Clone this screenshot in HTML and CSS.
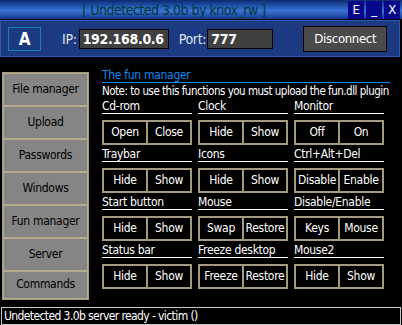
FILE: index.html
```html
<!DOCTYPE html>
<html lang="en">
<head>
  <meta charset="UTF-8">
  <title>Undetected 3.0b</title>
  <link rel="stylesheet" href="styles.css">
</head>
<body>
  <div class="window">
    <div class="titlebar">
      <div class="title">[ Undetected 3.0b by knox_rw ]</div>
      <div class="wbtn">E</div>
      <div class="wbtn">_</div>
      <div class="wbtn">X</div>
    </div>

    <div class="header">
      <div class="logo">A</div>
      <span class="hlabel ip-label">IP:</span>
      <div class="field ip">192.168.0.6</div>
      <span class="hlabel port-label">Port:</span>
      <div class="field port">777</div>
      <button class="disconnect">Disconnect</button>
    </div>

    <div class="main">
      <div class="sidebar">
        <div class="nav">File manager</div>
        <div class="nav">Upload</div>
        <div class="nav">Passwords</div>
        <div class="nav">Windows</div>
        <div class="nav">Fun manager</div>
        <div class="nav">Server</div>
        <div class="nav last">Commands</div>
      </div>

      <div class="content">
        <div class="heading">The fun manager</div>
        <div class="note">Note: to use this functions you must upload the fun.dll plugin</div>
        <div class="grid">
          <div class="group">
            <div class="label">Cd-rom</div>
            <div class="btns"><div class="btn">Open</div><div class="btn">Close</div></div>
          </div>
          <div class="group">
            <div class="label">Clock</div>
            <div class="btns"><div class="btn">Hide</div><div class="btn">Show</div></div>
          </div>
          <div class="group">
            <div class="label">Monitor</div>
            <div class="btns"><div class="btn">Off</div><div class="btn">On</div></div>
          </div>

          <div class="group">
            <div class="label">Traybar</div>
            <div class="btns"><div class="btn">Hide</div><div class="btn">Show</div></div>
          </div>
          <div class="group">
            <div class="label">Icons</div>
            <div class="btns"><div class="btn">Hide</div><div class="btn">Show</div></div>
          </div>
          <div class="group">
            <div class="label">Ctrl+Alt+Del</div>
            <div class="btns"><div class="btn">Disable</div><div class="btn">Enable</div></div>
          </div>

          <div class="group">
            <div class="label">Start button</div>
            <div class="btns"><div class="btn">Hide</div><div class="btn">Show</div></div>
          </div>
          <div class="group">
            <div class="label">Mouse</div>
            <div class="btns"><div class="btn">Swap</div><div class="btn">Restore</div></div>
          </div>
          <div class="group">
            <div class="label">Disable/Enable</div>
            <div class="btns"><div class="btn">Keys</div><div class="btn">Mouse</div></div>
          </div>

          <div class="group">
            <div class="label">Status bar</div>
            <div class="btns"><div class="btn">Hide</div><div class="btn">Show</div></div>
          </div>
          <div class="group">
            <div class="label">Freeze desktop</div>
            <div class="btns"><div class="btn">Freeze</div><div class="btn">Restore</div></div>
          </div>
          <div class="group">
            <div class="label">Mouse2</div>
            <div class="btns"><div class="btn">Hide</div><div class="btn">Show</div></div>
          </div>
        </div>
      </div>
    </div>

    <div class="status">Undetected 3.0b server ready - victim ()</div>
  </div>
</body>
</html>
```

FILE: styles.css
```css
body {
  margin: 0;
  background: #000;
  font-family: "DejaVu Sans Condensed", "Liberation Sans", sans-serif;
  font-size: 12px;
  letter-spacing: -0.3px;
  color: #fff;
  overflow: hidden;
}

.window {
  width: 402px;
  height: 325px;
  overflow: hidden;
}

/* title bar */
.titlebar {
  display: flex;
  height: 19px;
  background: linear-gradient(#0c2a70, #2d64c4 45%, #3a74d6 55%, #123a8c);
}

.title {
  flex: 1;
  height: 17px;
  padding-top: 2px;
  text-align: center;
  color: #003a3a;
  font-size: 14px;
  letter-spacing: -0.5px;
  line-height: 17px;
  white-space: nowrap;
}

.wbtn {
  width: 16px;
  height: 18px;
  margin: 1px 2px 0 0;
  background: #07078c;
  color: #fff;
  font-size: 13px;
  line-height: 18px;
  text-align: center;
}

/* connection header */
.header {
  display: flex;
  align-items: center;
  height: 35px;
  margin: 1px 2px 0 0;
  border: 1px solid #2a5cb0;
  background: #1c3a82;
}

.logo {
  width: 31px;
  height: 22px;
  margin-left: 7px;
  border: 1px solid #1584a6;
  text-align: center;
  font-weight: bold;
  font-size: 17px;
  line-height: 22px;
}

.hlabel {
  color: #dde4f0;
  font-size: 14px;
}

.ip-label {
  margin-left: 21px;
  margin-right: 2px;
}

.port-label {
  margin-left: 10px;
  margin-right: 1px;
}

.field {
  height: 18px;
  background: #404040;
  border: 1px solid #000;
  font-weight: bold;
  font-size: 14px;
  line-height: 18px;
  padding-left: 3px;
}

.ip {
  width: 85px;
}

.port {
  width: 61px;
}

.disconnect {
  margin-left: 30px;
  width: 84px;
  height: 26px;
  background: #4a4a4a;
  border: 1px solid #000;
  color: #fff;
  font-family: inherit;
  font-size: 13px;
  letter-spacing: -0.3px;
  padding: 0;
}

/* main area */
.main {
  display: flex;
  height: 250px;
}

.sidebar {
  display: flex;
  flex-direction: column;
  width: 85px;
  height: 226px;
  margin: 15px 0 0 2px;
  border: 1px solid #a39a80;
  background: #3a3a3a;
}

.nav {
  flex-shrink: 0;
  height: 31px;
  border: 1px solid #b4ab8e;
  background: #858585;
  color: #000;
  text-align: center;
  line-height: 31px;
}

.last {
  flex: 1;
  flex-shrink: 1;
  min-height: 0;
  line-height: 24px;
}

.content {
  width: 288px;
  margin-left: 13px;
  padding-top: 12px;
}

.heading {
  color: #1188ee;
  border-bottom: 1px solid #1188ee;
  height: 13px;
  line-height: 13px;
}

.note {
  height: 17px;
  font-size: 11.5px;
  letter-spacing: -0.5px;
  line-height: 17px;
  white-space: nowrap;
}

.grid {
  display: grid;
  grid-template-columns: 90px 90px 90px;
  column-gap: 6px;
  row-gap: 3px;
}

.label {
  height: 13px;
  line-height: 13px;
  border-bottom: 1px solid #fff;
  margin-bottom: 6px;
  white-space: nowrap;
}

.btns {
  display: flex;
  height: 21px;
  border: 2px solid #a39a80;
}

.btn {
  flex: 1;
  text-align: center;
  line-height: 21px;
}

.btn + .btn {
  border-left: 2px solid #a39a80;
}

/* status bar */
.status {
  margin: 0 1px;
  height: 16px;
  border: 1px solid #c8c8c8;
  font-size: 12px;
  letter-spacing: -0.6px;
  line-height: 16px;
  padding-left: 2px;
}
```
